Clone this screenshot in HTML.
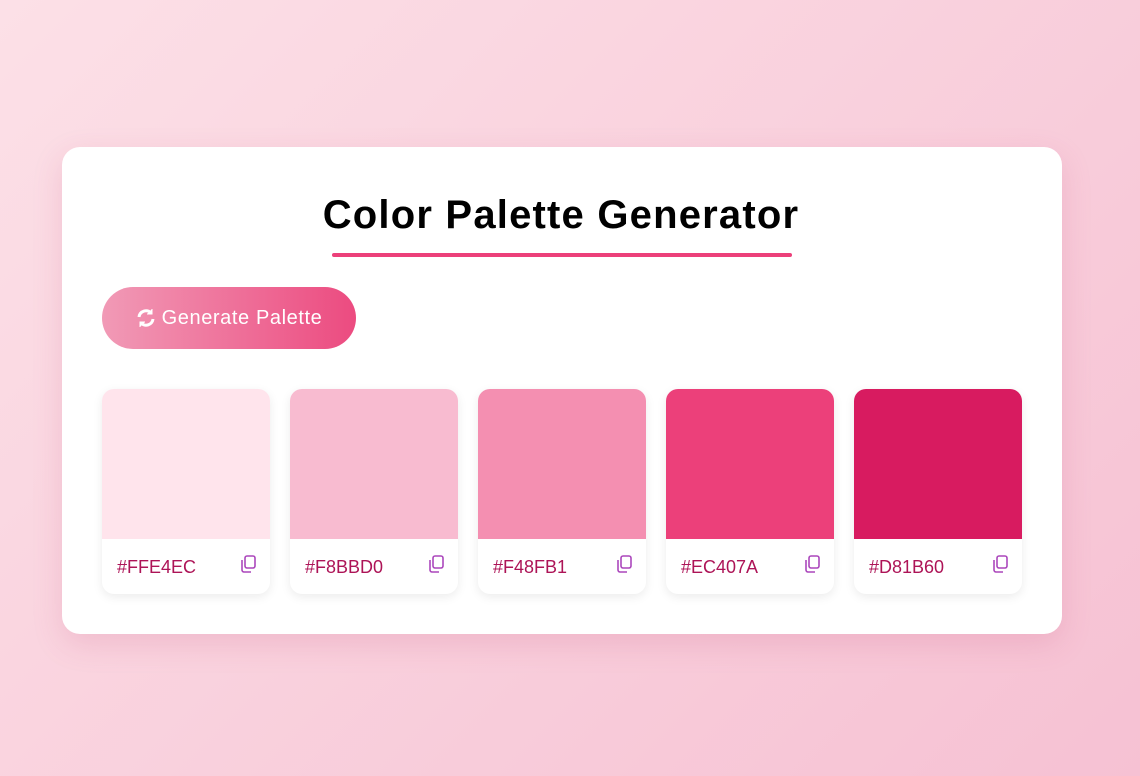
<!DOCTYPE html>
<html><head><style>
*{box-sizing:border-box;margin:0;padding:0}
body{width:1140px;height:776px;overflow:hidden;background:linear-gradient(135deg,#fce0e7 0%,#f6c1d3 100%);font-family:"Liberation Sans",sans-serif;position:relative}
.card{position:absolute;left:62px;top:147px;width:1000px;height:487px;background:#fff;border-radius:18px;box-shadow:0 10px 30px rgba(200,80,120,.18)}
h1{position:absolute;left:0;right:0;top:193px;text-align:center;font-size:40px;font-weight:bold;color:#000;letter-spacing:1.2px;padding-right:18px}
.ul{position:absolute;left:332px;top:253px;width:460px;height:4px;border-radius:2px;background:#ec407a}
.btn{position:absolute;left:102px;top:287px;width:254px;height:62px;border-radius:31px;background:linear-gradient(90deg,#f19ab6,#ec4b80);color:#fff;font-size:20px;letter-spacing:0.6px;display:flex;align-items:center;justify-content:center;gap:6px}
.sw{position:absolute;top:389px;width:168px;height:205px;border-radius:12px;overflow:hidden;background:#fff;box-shadow:0 3px 10px rgba(0,0,0,.08)}
.sw .c{height:150px}
.sw .t{position:absolute;left:15px;top:168px;font-size:18px;color:#ad1457}
.sw svg{position:absolute;right:13px;top:166px}
</style></head><body>
<div class="card"></div>
<h1>Color Palette Generator</h1>
<div class="ul"></div>
<div class="btn"><svg width="20" height="20" viewBox="0 0 20 20" fill="none" stroke="#fff" stroke-width="3"><path d="M3 9a7 7 0 0 1 12-4"/><path d="M17 11a7 7 0 0 1-12 4"/><path d="M16 1v5h-5" fill="#fff" stroke-width="1"/><path d="M4 19v-5h5" fill="#fff" stroke-width="1"/></svg>Generate Palette</div>
<div class="sw" style="left:102px"><div class="c" style="background:#ffe4ec"></div><div class="t">#FFE4EC</div><svg width="18" height="18" viewBox="0 0 18 18" fill="none" stroke="#ab47bc" stroke-width="1.6"><rect x="6" y="1" width="10" height="12" rx="2"/><path d="M3 5v10a2 2 0 0 0 2 2h7"/></svg></div>
<div class="sw" style="left:290px"><div class="c" style="background:#f8bbd0"></div><div class="t">#F8BBD0</div><svg width="18" height="18" viewBox="0 0 18 18" fill="none" stroke="#ab47bc" stroke-width="1.6"><rect x="6" y="1" width="10" height="12" rx="2"/><path d="M3 5v10a2 2 0 0 0 2 2h7"/></svg></div>
<div class="sw" style="left:478px"><div class="c" style="background:#f48fb1"></div><div class="t">#F48FB1</div><svg width="18" height="18" viewBox="0 0 18 18" fill="none" stroke="#ab47bc" stroke-width="1.6"><rect x="6" y="1" width="10" height="12" rx="2"/><path d="M3 5v10a2 2 0 0 0 2 2h7"/></svg></div>
<div class="sw" style="left:666px"><div class="c" style="background:#ec407a"></div><div class="t">#EC407A</div><svg width="18" height="18" viewBox="0 0 18 18" fill="none" stroke="#ab47bc" stroke-width="1.6"><rect x="6" y="1" width="10" height="12" rx="2"/><path d="M3 5v10a2 2 0 0 0 2 2h7"/></svg></div>
<div class="sw" style="left:854px"><div class="c" style="background:#d81b60"></div><div class="t">#D81B60</div><svg width="18" height="18" viewBox="0 0 18 18" fill="none" stroke="#ab47bc" stroke-width="1.6"><rect x="6" y="1" width="10" height="12" rx="2"/><path d="M3 5v10a2 2 0 0 0 2 2h7"/></svg></div>
</body></html>
